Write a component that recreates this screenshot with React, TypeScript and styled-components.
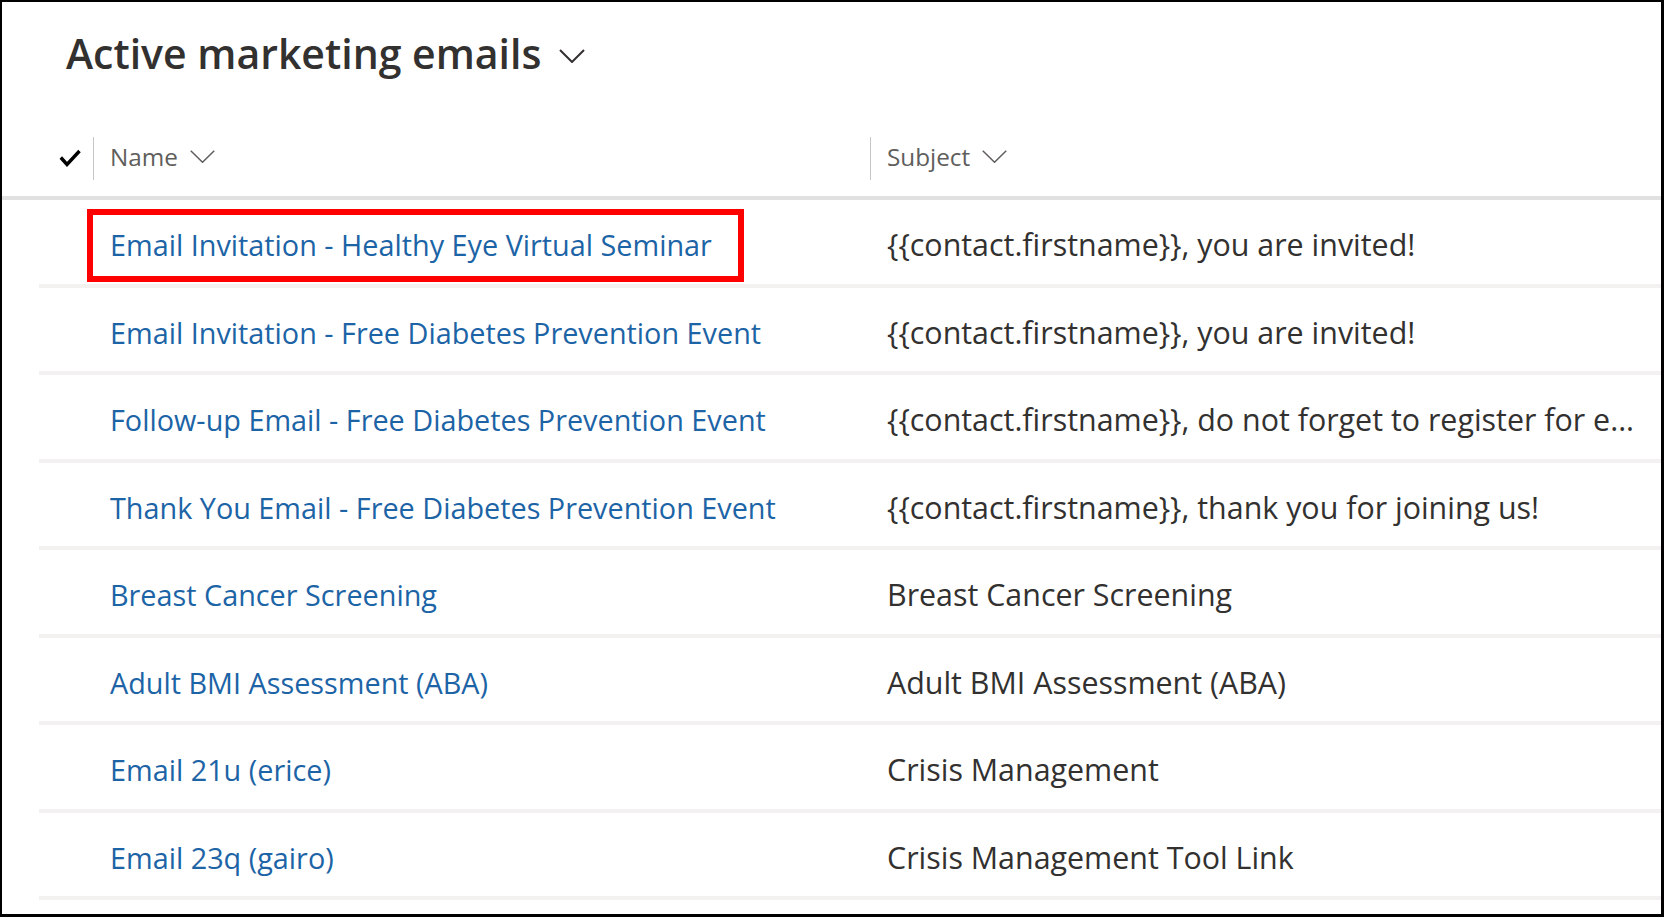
import React from "react";
import styled, { createGlobalStyle } from "styled-components";

const GlobalStyle = createGlobalStyle`
  html, body { margin: 0; padding: 0; background: #ffffff; }
  body { font-family: "Open Sans", "Noto Sans", Arial, sans-serif; }
  * { box-sizing: border-box; }
`;

const Frame = styled.div`
  width: 1664px;
  height: 917px;
  border-style: solid;
  border-color: #000;
  border-width: 2px 3px 3px 2px;
  background: #fff;
  overflow: hidden;
  display: flex;
  flex-direction: column;
`;

const TitleBar = styled.div`
  height: 118px;
  padding: 31px 0 0 64px;
  display: flex;
  align-items: flex-start;
`;

const Title = styled.h1`
  margin: 0;
  font-family: "Open Sans", sans-serif;
  font-weight: 600;
  font-size: 41px;
  line-height: 41px;
  color: #323130;
  display: flex;
  align-items: center;
  gap: 18px;
`;

const TitleChevron = styled.span`
  display: flex;
  padding-top: 5px;
`;

const HeaderRow = styled.div`
  height: 80px;
  display: flex;
  align-items: center;
  border-bottom: 4px solid #e1e1e1;
`;

const CheckCell = styled.div`
  width: 91px;
  padding-left: 57px;
  display: flex;
  align-items: center;
`;

const ColumnDivider = styled.span`
  width: 1px;
  height: 43px;
  background: #c8c6c4;
  flex: none;
`;

const HeaderCell = styled.div<{ $width?: number }>`
  ${(p) => (p.$width ? `width: ${p.$width}px;` : "flex: 1;")}
  padding-left: 16px;
  padding-bottom: 4px;
  display: flex;
  align-items: center;
  gap: 12px;
  font-size: 24.3px;
  color: #605e5c;
`;

const RowList = styled.div`
  display: flex;
  flex-direction: column;
  padding-left: 37px;
`;

const Row = styled.div`
  height: 87.5px;
  display: grid;
  grid-template-columns: 831px 1fr;
  align-items: center;
  border-bottom: 4px solid #f3f2f1;
  padding-top: 6px;
`;

const NameCell = styled.div`
  padding-left: 71px;
  font-size: 28.8px;
  white-space: nowrap;
`;

const NameLink = styled.span<{ $highlighted?: boolean }>`
  color: #1c64a6;
  position: relative;
  ${(p) =>
    p.$highlighted &&
    `&::after {
      content: "";
      position: absolute;
      left: -23px;
      right: -32px;
      top: -16px;
      bottom: -18px;
      border: 6px solid #ff0000;
    }`}
`;

const SubjectCell = styled.div`
  padding-left: 17px;
  padding-right: 8px;
  font-size: 30.4px;
  color: #323130;
  white-space: nowrap;
  overflow: hidden;
  text-overflow: ellipsis;
`;

const Chevron = ({ w, h, stroke, sw }: { w: number; h: number; stroke: string; sw: number }) => (
  <svg width={w} height={h} viewBox={`0 0 ${w} ${h}`} fill="none">
    <polyline
      points={`${sw / 2},${sw / 2} ${w / 2},${h - sw / 2} ${w - sw / 2},${sw / 2}`}
      stroke={stroke}
      strokeWidth={sw}
      strokeLinejoin="miter"
    />
  </svg>
);

const CheckIcon = () => (
  <svg width="22" height="18" viewBox="0 0 22 18" fill="none">
    <polyline points="1.8,8.5 8,15.5 20.5,2" stroke="#000" strokeWidth="3.4" />
  </svg>
);

const emails = [
  { name: "Email Invitation - Healthy Eye Virtual Seminar", subject: "{{contact.firstname}}, you are invited!", highlighted: true },
  { name: "Email Invitation - Free Diabetes Prevention Event", subject: "{{contact.firstname}}, you are invited!" },
  { name: "Follow-up Email - Free Diabetes Prevention Event", subject: "{{contact.firstname}}, do not forget to register for e..." },
  { name: "Thank You Email - Free Diabetes Prevention Event", subject: "{{contact.firstname}}, thank you for joining us!" },
  { name: "Breast Cancer Screening", subject: "Breast Cancer Screening" },
  { name: "Adult BMI Assessment (ABA)", subject: "Adult BMI Assessment (ABA)" },
  { name: "Email 21u (erice)", subject: "Crisis Management" },
  { name: "Email 23q (gairo)", subject: "Crisis Management Tool Link" },
];

export default function App() {
  return (
    <>
      <GlobalStyle />
      <Frame>
        <TitleBar>
          <Title>
            Active marketing emails
            <TitleChevron>
              <Chevron w={26} h={14} stroke="#323130" sw={2} />
            </TitleChevron>
          </Title>
        </TitleBar>
        <HeaderRow>
          <CheckCell>
            <CheckIcon />
          </CheckCell>
          <ColumnDivider />
          <HeaderCell $width={776}>
            Name
            <Chevron w={25} h={13} stroke="#605e5c" sw={1.5} />
          </HeaderCell>
          <ColumnDivider />
          <HeaderCell>
            Subject
            <Chevron w={25} h={13} stroke="#605e5c" sw={1.5} />
          </HeaderCell>
        </HeaderRow>
        <RowList>
          {emails.map((e) => (
            <Row key={e.name}>
              <NameCell>
                <NameLink $highlighted={e.highlighted}>{e.name}</NameLink>
              </NameCell>
              <SubjectCell>{e.subject}</SubjectCell>
            </Row>
          ))}
        </RowList>
      </Frame>
    </>
  );
}
